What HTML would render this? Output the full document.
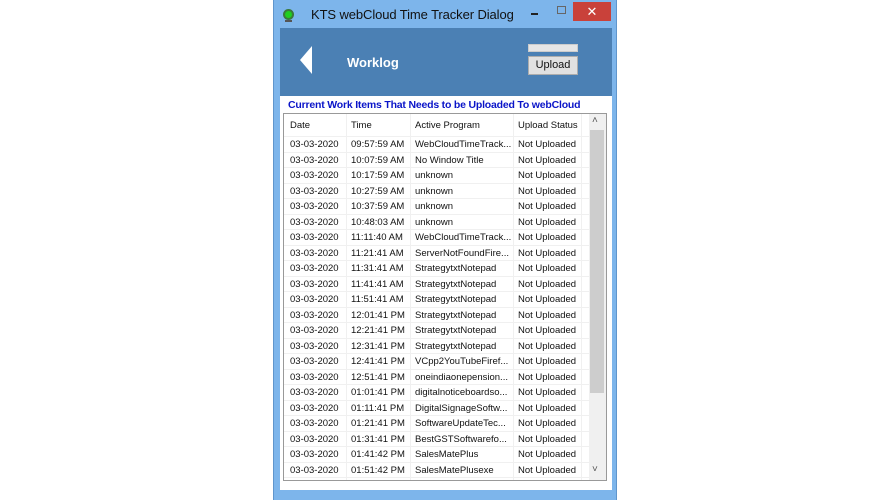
<!DOCTYPE html>
<html><head><style>
*{margin:0;padding:0;box-sizing:border-box}
body{width:890px;height:500px;background:#fff;position:relative;overflow:hidden;font-family:"Liberation Sans",sans-serif}
.win{position:absolute;left:273px;top:0;width:344px;height:500px;background:#7db5eb;border-left:1px solid #5f95cc;border-right:1px solid #5f95cc}
.title{position:absolute;left:37px;top:7px;font-size:13px;color:#111;letter-spacing:-0.1px}
.client{position:absolute;left:6px;top:28px;width:332px;height:462px;background:#fff}
.panel{position:absolute;left:0;top:0;width:332px;height:68px;background:#4b80b4}
.lbl{position:absolute;left:8px;top:71px;font-size:10.5px;font-weight:bold;color:#0a14c8;white-space:nowrap;letter-spacing:-0.2px}
.list{position:absolute;left:3px;top:85px;width:324px;height:368px;border:1px solid #999;background:#fff}
.h,.r{position:absolute;left:0;font-size:9.5px;color:#111;white-space:nowrap}
.c{position:absolute}
.row{position:absolute;left:0;width:305px;height:15.5px;border-bottom:1px solid #f0f0f0}
.sep{position:absolute;top:0;width:1px;height:366px;background:#f0f0f0}
</style></head><body>
<div class="win">
 <div style="position:absolute;left:9px;top:9px;width:11px;height:11px;border-radius:50%;background:#1fcf1f;border:2px solid #3a7a3a"></div>
 <div style="position:absolute;left:11px;top:20px;width:7px;height:2px;background:#555"></div>
 <div class="title">KTS webCloud Time Tracker Dialog</div>
 <div style="position:absolute;left:257px;top:13px;width:7px;height:2px;background:#222"></div>
 <div style="position:absolute;left:283px;top:6px;width:9px;height:8px;border:1px solid #666"></div>
 <div style="position:absolute;left:299px;top:2px;width:38px;height:19px;background:#c9413a;color:#fff;font-size:13px;text-align:center;line-height:19px">✕</div>
 <div class="client">
  <div class="panel">
   <svg style="position:absolute;left:19px;top:17px" width="14" height="30"><polygon points="13,1 13,29 1,15" fill="#fff"/></svg>
   <div style="position:absolute;left:67px;top:27px;color:#fff;font-weight:bold;font-size:13px">Worklog</div>
   <div style="position:absolute;left:248px;top:16px;width:50px;height:8px;background:#e6e6e6;border:1px solid #ccc"></div>
   <div style="position:absolute;left:248px;top:28px;width:50px;height:19px;background:#e1e1e1;border:1px solid #adadad;font-size:11px;text-align:center;line-height:17px;color:#111">Upload</div>
  </div>
  <div class="lbl">Current Work Items That Needs to be Uploaded To webCloud</div>
  <div class="list">
   <div class="sep" style="left:62px"></div><div class="sep" style="left:126px"></div><div class="sep" style="left:229px"></div><div class="sep" style="left:297px"></div>
   <div class="row" style="top:0;height:23px"><div class="h c" style="left:6px;top:6px">Date</div><div class="h c" style="left:67px;top:6px">Time</div><div class="h c" style="left:131px;top:6px">Active Program</div><div class="h c" style="left:234px;top:6px">Upload Status</div></div>
   <div id="rows"></div>
   <div style="position:absolute;left:305px;top:0;width:17px;height:366px;background:#f0f0f0"></div>
   <div style="position:absolute;left:306px;top:16px;width:14px;height:263px;background:#cdcdcd"></div>
   <div style="position:absolute;left:308px;top:1px;font-size:10px;color:#555">˄</div>
   <div style="position:absolute;left:308px;top:350px;font-size:10px;color:#555">˅</div>
  </div>
 </div>
</div>
<script>
var d=[["09:57:59 AM","WebCloudTimeTrack..."],["10:07:59 AM","No Window Title"],["10:17:59 AM","unknown"],["10:27:59 AM","unknown"],["10:37:59 AM","unknown"],["10:48:03 AM","unknown"],["11:11:40 AM","WebCloudTimeTrack..."],["11:21:41 AM","ServerNotFoundFire..."],["11:31:41 AM","StrategytxtNotepad"],["11:41:41 AM","StrategytxtNotepad"],["11:51:41 AM","StrategytxtNotepad"],["12:01:41 PM","StrategytxtNotepad"],["12:21:41 PM","StrategytxtNotepad"],["12:31:41 PM","StrategytxtNotepad"],["12:41:41 PM","VCpp2YouTubeFiref..."],["12:51:41 PM","oneindiaonepension..."],["01:01:41 PM","digitalnoticeboardso..."],["01:11:41 PM","DigitalSignageSoftw..."],["01:21:41 PM","SoftwareUpdateTec..."],["01:31:41 PM","BestGSTSoftwarefo..."],["01:41:42 PM","SalesMatePlus"],["01:51:42 PM","SalesMatePlusexe"]];
var h="";d.forEach(function(x,i){var t=23+i*15.52;h+='<div class="row" style="top:'+t+'px"><div class="r c" style="left:6px;top:2px">03-03-2020</div><div class="r c" style="left:67px;top:2px">'+x[0]+'</div><div class="r c" style="left:131px;top:2px">'+x[1]+'</div><div class="r c" style="left:234px;top:2px">Not Uploaded</div></div>';});
document.getElementById("rows").innerHTML=h;
</script>
</body></html>
